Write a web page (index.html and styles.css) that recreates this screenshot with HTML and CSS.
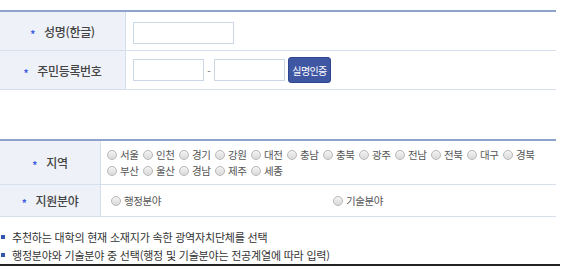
FILE: index.html
```html
<!DOCTYPE html>
<html lang="ko">
<head>
    <meta charset="UTF-8">
    <title>추천 정보 입력</title>
    <link rel="stylesheet" href="styles.css">
</head>
<body>
    <div class="wrap">
        <!-- 본인 확인 -->
        <table class="form-table first">
            <tr>
                <th class="w-wide"><span class="star">*</span>성명(한글)</th>
                <td><input type="text" class="inp inp-name"></td>
            </tr>
            <tr>
                <th class="w-wide"><span class="star">*</span>주민등록번호</th>
                <td>
                    <div class="jumin">
                        <input type="text" class="inp inp-jumin">
                        <span class="dash">-</span>
                        <input type="password" class="inp inp-jumin">
                        <button type="button" class="btn-auth">실명인증</button>
                    </div>
                </td>
            </tr>
        </table>

        <!-- 지역 / 분야 -->
        <table class="form-table second">
            <tr class="row-region">
                <th class="w-narrow"><span class="star">*</span>지역</th>
                <td>
                    <div class="radio-grid">
                        <label class="rd"><input type="radio" name="area">서울</label>
                        <label class="rd"><input type="radio" name="area">인천</label>
                        <label class="rd"><input type="radio" name="area">경기</label>
                        <label class="rd"><input type="radio" name="area">강원</label>
                        <label class="rd"><input type="radio" name="area">대전</label>
                        <label class="rd"><input type="radio" name="area">충남</label>
                        <label class="rd"><input type="radio" name="area">충북</label>
                        <label class="rd"><input type="radio" name="area">광주</label>
                        <label class="rd"><input type="radio" name="area">전남</label>
                        <label class="rd"><input type="radio" name="area">전북</label>
                        <label class="rd"><input type="radio" name="area">대구</label>
                        <label class="rd"><input type="radio" name="area">경북</label>
                        <label class="rd"><input type="radio" name="area">부산</label>
                        <label class="rd"><input type="radio" name="area">울산</label>
                        <label class="rd"><input type="radio" name="area">경남</label>
                        <label class="rd"><input type="radio" name="area">제주</label>
                        <label class="rd"><input type="radio" name="area">세종</label>
                    </div>
                </td>
            </tr>
            <tr class="row-field">
                <th class="w-narrow"><span class="star">*</span>지원분야</th>
                <td>
                    <div class="field-opts">
                        <label class="rd half"><input type="radio" name="field">행정분야</label>
                        <label class="rd auto"><input type="radio" name="field">기술분야</label>
                    </div>
                </td>
            </tr>
        </table>

        <ul class="notes">
            <li>추천하는 대학의 현재 소재지가 속한 광역자치단체를 선택</li>
            <li>행정분야와 기술분야 중 선택(행정 및 기술분야는 전공계열에 따라 입력)</li>
        </ul>
        <div class="bottom-line"></div>
    </div>
</body>
</html>
```

FILE: styles.css
```css
/* 기본 */
body {
    margin: 0;
    background-color: #ffffff;
    font-family: "Noto Sans CJK KR", "Noto Sans", sans-serif;
    color: #333333;
}

.wrap {
    width: 560px;
}

/* 입력 테이블 */
.form-table {
    width: 556px;
    border-collapse: collapse;
    border-top: 2px solid #8ea2ce;
}

.form-table.first {
    margin-top: 10px;
}

.form-table.second {
    margin-top: 49px;
}

.form-table th,
.form-table td {
    border-bottom: 1px solid #d6e0ec;
    padding: 0;
    height: 38px;
}

.form-table th {
    background-color: #eef2f8;
    border-right: 1px solid #d6e0ec;
    font-size: 12px;
    font-weight: 500;
    color: #444444;
    text-align: center;
    letter-spacing: -0.3px;
}

.w-wide {
    width: 125px;
}

.w-narrow {
    width: 100px;
}

.star {
    color: #3a5ce0;
    font-size: 10px;
    font-weight: bold;
    margin-right: 9px;
    position: relative;
    top: 1px;
}

.form-table td {
    padding-left: 7px;
}

/* 텍스트 입력 */
.inp {
    box-sizing: border-box;
    height: 22px;
    border: 1px solid #c9d7e7;
    padding: 0 4px;
    margin: 0;
    font-size: 12px;
}

.inp-name {
    width: 101px;
}

.jumin {
    display: flex;
    align-items: center;
}

.inp-jumin {
    width: 71px;
}

.dash {
    width: 10px;
    text-align: center;
    font-size: 10px;
    color: #666666;
}

.btn-auth {
    margin-left: 3px;
    height: 26px;
    width: 43px;
    padding: 0;
    background-color: #3f57a3;
    border: 1px solid #2f4690;
    border-radius: 3px;
    color: #ffffff;
    font-family: inherit;
    font-size: 10px;
    letter-spacing: -0.6px;
}

/* 라디오 */
.row-region th,
.row-region td {
    height: 43px;
}

.row-field th,
.row-field td {
    height: 31px;
}

.row-region td {
    padding-left: 6px;
}

.row-field td {
    padding-left: 10px;
}

.radio-grid {
    display: flex;
    flex-wrap: wrap;
    width: 440px;
}

.rd {
    display: flex;
    align-items: center;
    width: 36px;
    height: 16px;
    font-size: 10.5px;
    letter-spacing: -0.4px;
    color: #555555;
    white-space: nowrap;
}

.rd input {
    appearance: none;
    flex-shrink: 0;
    box-sizing: border-box;
    width: 10px;
    height: 10px;
    margin: 0 3px 0 0;
    border: 1px solid #b9b9b9;
    border-radius: 50%;
    background: linear-gradient(#f4f4f4, #d9d9d9);
}

.field-opts {
    display: flex;
}

.rd.half {
    width: 222px;
}

.rd.auto {
    width: auto;
}

/* 안내 문구 */
.notes {
    list-style: none;
    margin: 11px 0 0 0;
    padding: 0;
}

.notes li {
    position: relative;
    padding-left: 12px;
    font-size: 11px;
    line-height: 18px;
    letter-spacing: -0.2px;
    color: #333333;
}

.notes li::before {
    content: "";
    position: absolute;
    left: 1px;
    top: 7px;
    width: 4px;
    height: 4px;
    background-color: #3355aa;
}

/* 하단 구분선 */
.bottom-line {
    border-top: 2px solid #222222;
}
```
